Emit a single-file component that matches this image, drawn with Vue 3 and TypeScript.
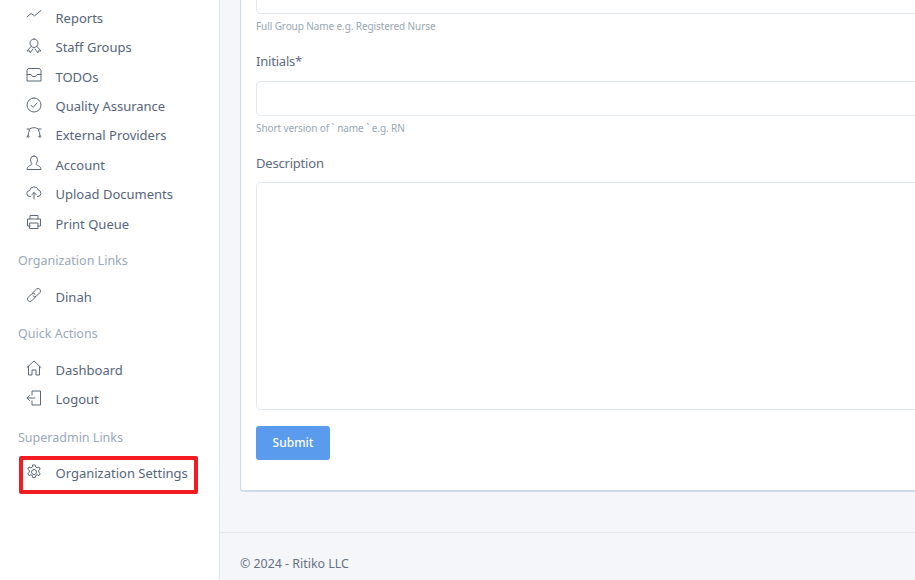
<script setup lang="ts">
interface Item { label: string; icon: string }
interface Group { title?: string; items: Item[] }
const groups: Group[] = [
  { items: [
    { label: 'Reports', icon: 'M1 9 5 5.500l3.500 2.300L15 2.500' },
    { label: 'Staff Groups', icon: 'M8 1a4 4 0 0 0-4 4c0 2 1.500 4.500 4 4.500s4-2.500 4-4.500a4 4 0 0 0-4-4ZM5 8.500 1 13l2.500-.2.7 2L7 11M11 8.500l4 4.500-2.500-.2-.7 2L9 11' },
    { label: 'TODOs', icon: 'M2.500 1.500h11l1.500 2v10.500H1V3.500ZM1 7.500h4l1.500 2h3l1.500-2h4' },
    { label: 'Quality Assurance', icon: 'M8 1a7 7 0 1 0 0 14A7 7 0 0 0 8 1ZM5 8.200l2.200 2.200L11 6' },
    { label: 'External Providers', icon: 'M1 3h2M13 3h2M3 3.500C5.500 1 10.500 1 13 3.500M3.500 4C2.800 5.500 2.300 7.500 2 9.500M12.500 4c.7 1.500 1.200 3.500 1.500 5.500M1.200 10.500a.9.9 0 1 0 1.800 0 .9.9 0 0 0-1.800 0M13 10.500a.9.900 0 1 0 1.800 0 .9.9 0 0 0-1.800 0' },
    { label: 'Account', icon: 'M8 1a3.500 3.500 0 0 0-3.500 3.500c0 2 1 3.500 1.500 4.500 0 1.500-5 1.500-5 5.500h14c0-4-5-4-5-5.500.5-1 1.500-2.500 1.500-4.500A3.500 3.500 0 0 0 8 1Z' },
    { label: 'Upload Documents', icon: 'M4.500 11.500H4A3 3 0 0 1 3.600 5.500 4.500 4.500 0 0 1 12.300 5 3.300 3.300 0 0 1 12 11.500h-.5M8 14V7.500M5.800 9.700 8 7.500l2.200 2.200' },
    { label: 'Print Queue', icon: 'M4 5V1.500h8V5M4 12H1.500V5h13v7H12M4 9h8v5.500H4Z' },
  ]},
  { title: 'Organization Links', items: [
    { label: 'Dinah', icon: 'M6.500 6 10.500 2a2.500 2.500 0 0 1 3.500 3.500L10.500 9a2.500 2.500 0 0 1-3.500 0M9.500 10 5.500 14A2.500 2.500 0 0 1 2 10.500L5.500 7a2.500 2.500 0 0 1 3.500 0' },
  ]},
  { title: 'Quick Actions', items: [
    { label: 'Dashboard', icon: 'M1 7.500 8 1l7 6.500M2.500 6.500V15h3.500v-5h4v5h3.500V6.500' },
    { label: 'Logout', icon: 'M6 5V1h8.500v14H6v-4M9 8H1M3.500 5.500 1 8l2.500 2.500' },
  ]},
  { title: 'Superadmin Links', items: [
    { label: 'Organization Settings', icon: 'M8 5.500a2.500 2.500 0 1 0 0 5 2.500 2.500 0 0 0 0-5ZM6.800 1h2.400l.4 2 1.500.8 1.900-.8 1.200 2.100-1.500 1.300v1.800l1.500 1.300-1.200 2.100-1.900-.8-1.500.8-.4 2H6.800l-.4-2-1.500-.8-1.900.8-1.200-2.100 1.500-1.300V6.400L1.800 5.100 3 3l1.900.8 1.500-.8Z' },
  ]},
]
</script>

<template>
  <div class="page">
    <aside class="sidebar">
      <section v-for="(g, i) in groups" :key="i" class="group">
        <h3 v-if="g.title" class="group-title">{{ g.title }}</h3>
        <a v-for="it in g.items" :key="it.label" class="nav-item">
          <svg class="nav-icon" viewBox="0 0 16 16" fill="none" stroke="currentColor" stroke-width="1" stroke-linecap="round" stroke-linejoin="round"><path :d="it.icon" /></svg>
          <span>{{ it.label }}</span>
        </a>
      </section>
      <div class="highlight" aria-hidden="true"></div>
    </aside>
    <div class="content">
      <main class="main">
        <form class="card" @submit.prevent>
          <div class="field">
            <input class="input" type="text" />
            <p class="hint">Full Group Name e.g. Registered Nurse</p>
          </div>
          <div class="field">
            <label class="label">Initials*</label>
            <input class="input" type="text" />
            <p class="hint">Short version of `<span class="code">name</span>` e.g. RN</p>
          </div>
          <div class="field field-last">
            <label class="label">Description</label>
            <textarea class="textarea"></textarea>
          </div>
          <button class="submit" type="submit">Submit</button>
        </form>
      </main>
      <footer class="footer">© 2024 - Ritiko LLC</footer>
    </div>
  </div>
</template>

<style>
html, body { margin: 0; overflow: hidden; height: 580px; }
</style>

<style scoped>
.page {
  display: flex;
  width: 915px;
  height: 580px;
  overflow: hidden;
  background: #f4f6fa;
  font-family: "Noto Sans", "Open Sans", sans-serif;
  color: #5c6b7d;
}
.sidebar {
  position: relative;
  flex: 0 0 220px;
  box-sizing: border-box;
  padding-top: 3.200px;
  background: #fff;
  border-right: 1px solid #dfe3ea;
}
.group { margin-bottom: 7.700px; }
.group:nth-of-type(3) { margin-bottom: 8.700px; }
.group-title {
  margin: 0;
  padding: 0 0 0 18px;
  height: 29px;
  line-height: 29px;
  font-size: 12.500px;
  font-weight: 400;
  color: #9aa8b8;
}
.group-title + .nav-item { margin-top: 7px; }
.nav-item {
  display: flex;
  align-items: center;
  height: 29.400px;
  padding-left: 26px;
  font-size: 13px;
  color: #56657a;
}
.nav-icon {
  flex: none;
  width: 16px;
  height: 16px;
  margin-right: 13.500px;
  margin-top: -3px;
  color: #5b6878;
}
.highlight {
  position: absolute;
  left: 19px;
  top: 456px;
  width: 179px;
  height: 38px;
  box-sizing: border-box;
  border: 4px solid #f01c22;
  border-radius: 2px;
}
.content {
  flex: 1;
  min-width: 0;
  display: flex;
  flex-direction: column;
}
.main {
  flex: 1;
  padding: 0 0 0 20px;
  min-height: 0;
  border-bottom: 1px solid #e3e6ec;
}
.card {
  box-sizing: border-box;
  width: 900px;
  height: 524px;
  margin-top: -32px;
  padding: 10px 15px;
  background: #fff;
  border: 1px solid #cddbe8;
  border-bottom-width: 2px;
  border-radius: 4px;
}
.field { margin-bottom: 18px; }
.field-last { margin-bottom: 16px; }
.label {
  display: block;
  margin-bottom: 9.500px;
  font-size: 13px;
  letter-spacing: -0.200px;
  line-height: 20px;
  color: #5c6b7d;
}
.input, .textarea {
  display: block;
  box-sizing: border-box;
  width: 100%;
  background: #fff;
  border: 1px solid #e2e8ec;
  border-radius: 4px;
  outline: none;
  resize: none;
}
.input { height: 35px; }
.textarea { height: 228px; }
.hint {
  margin: 5px 0 0;
  font-size: 10px;
  letter-spacing: -0.100px;
  line-height: 14px;
  color: #98a6b3;
}
.code { padding: 0 3px; }
.submit {
  display: block;
  width: 74px;
  height: 34px;
  padding: 0 0 2px;
  background: #5a9bee;
  border: none;
  border-radius: 3px;
  color: #fff;
  font: 500 12px "Noto Sans", sans-serif;
}
.footer {
  flex: 0 0 47px;
  box-sizing: border-box;
  padding: 23px 0 0 20px;
  font-size: 12.400px;
  line-height: 16px;
  color: #66727f;
}
</style>
